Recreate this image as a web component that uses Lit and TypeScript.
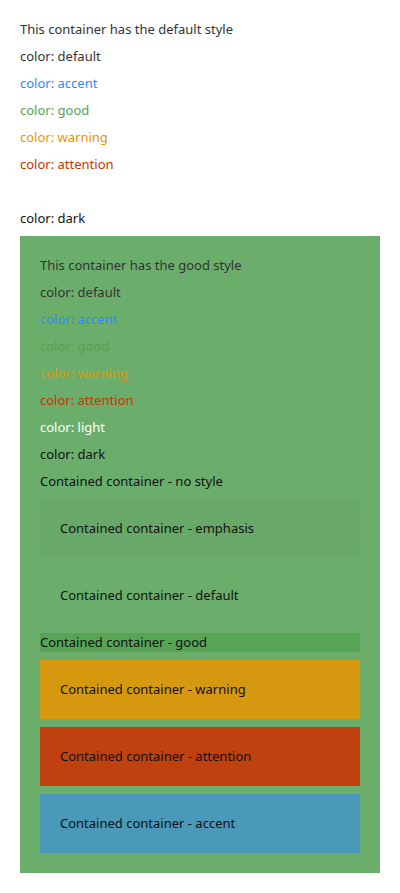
import { LitElement, html, css } from "lit";
import { customElement } from "lit/decorators.js";
import { classMap } from "lit/directives/class-map.js";

const COLORS = ["default", "accent", "good", "warning", "attention", "light", "dark"];
const NESTED = ["no style", "emphasis", "default", "good", "warning", "attention", "accent"];

@customElement("app-root")
export class AppRoot extends LitElement {
  static styles = css`
    :host {
      display: block;
      background: #ffffff;
      font: 13px/19px "Noto Sans", "Open Sans", sans-serif;
      color: #333333;
    }
    .card,
    .container {
      display: flex;
      flex-direction: column;
      gap: 8px;
    }
    .card,
    .padded {
      padding: 20px;
    }
    p {
      margin: 0;
    }
    .outer-good { background: #6bae6b; }
    .text-accent { color: #2e89fc; }
    .text-good { color: #54a254; }
    .text-warning { color: #e69500; }
    .text-attention { color: #cc3300; }
    .text-light { color: #ffffff; }
    .text-dark { color: #111111; }
    .bg-emphasis { background: #68a868; }
    .bg-good { background: #57a457; }
    .bg-warning { background: #d6980f; }
    .bg-attention { background: #bf410f; }
    .bg-accent { background: #4a99b8; }
  `;

  private renderTexts(style: string) {
    return html`
      <p>This container has the ${style} style</p>
      ${COLORS.map((c) => html`<p class="text-${c}">color: ${c}</p>`)}
    `;
  }

  private renderNested(style: string) {
    const classes = {
      container: true,
      [`bg-${style.replace(" ", "-")}`]: true,
      padded: style !== "no style" && style !== "good",
    };
    return html`
      <section class=${classMap(classes)}>
        <p class="text-dark">Contained container - ${style}</p>
      </section>
    `;
  }

  render() {
    return html`
      <main class="card">
        <section class="container">${this.renderTexts("default")}</section>
        <section class="container padded outer-good">
          ${this.renderTexts("good")} ${NESTED.map((s) => this.renderNested(s))}
        </section>
      </main>
    `;
  }
}
